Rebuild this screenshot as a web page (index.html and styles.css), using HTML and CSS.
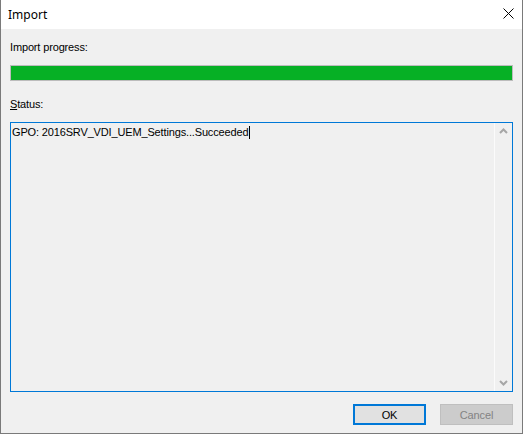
FILE: index.html
```html
<!DOCTYPE html>
<html>
<head>
<meta charset="utf-8">
<link rel="stylesheet" href="styles.css">
</head>
<body>
<div class="window">
  <div class="titlebar">
    <span class="title">Import</span>
    <svg class="close" width="11" height="11" viewBox="0 0 11 11"><path d="M0.5 0.5 L10.5 10.5 M10.5 0.5 L0.5 10.5" stroke="#000" stroke-width="1" fill="none"/></svg>
  </div>
  <div class="content">
    <div class="label l1">Import progress:</div>
    <div class="progress"><div class="fill"></div></div>
    <div class="label l2"><u>S</u>tatus:</div>
    <div class="textbox">
      <div class="text">GPO: 2016SRV_VDI_UEM_Settings...Succeeded<span class="caret"></span></div>
      <div class="scrollbar">
        <svg class="arrow" width="17" height="17" viewBox="0 0 17 17"><path d="M5 10 L8.5 6.5 L12 10" stroke="#a6a6a6" stroke-width="2" fill="none"/></svg>
        <svg class="arrow" width="17" height="17" viewBox="0 0 17 17"><path d="M5 7 L8.5 10.5 L12 7" stroke="#a6a6a6" stroke-width="2" fill="none"/></svg>
      </div>
    </div>
    <div class="buttons">
      <div class="btn ok">OK</div>
      <div class="btn cancel">Cancel</div>
    </div>
  </div>
</div>
</body>
</html>
```
FILE: styles.css
```css
html, body {
  margin: 0;
  padding: 0;
  background: #f0f0f0;
}
.window {
  box-sizing: border-box;
  width: 523px;
  height: 434px;
  border: 1px solid #7a7a7a;
  border-top: none;
  background: #f0f0f0;
  font-family: "Liberation Sans", Arial, sans-serif;
  font-size: 11px;
  letter-spacing: -0.15px;
  color: #000;
  display: flex;
  flex-direction: column;
}
.titlebar {
  height: 29px;
  background: #fff;
  display: flex;
  align-items: center;
  justify-content: space-between;
  padding: 0 8px 0 7px;
}
.title {
  font-family: "Noto Sans", "Open Sans", sans-serif;
  font-size: 12px;
  letter-spacing: 0;
  color: #000;
  margin-top: -1px;
}
.close {
  display: block;
  margin-top: -3px;
}
.content {
  padding: 0 9px 0 9px;
  display: flex;
  flex-direction: column;
}
.label {
  line-height: 13px;
  height: 13px;
}
.l1 { margin-top: 12px; }
.progress {
  margin-top: 11px;
  height: 16px;
  box-sizing: border-box;
  border: 1px solid #bcbcbc;
  background: #e6e6e6;
}
.fill {
  height: 100%;
  width: 100%;
  background: #06b025;
}
.l2 { margin-top: 17px; }
.textbox {
  margin-top: 11px;
  height: 270px;
  box-sizing: border-box;
  border: 1px solid #0078d7;
  display: flex;
}
.text {
  flex: 1;
  padding: 3px 0 0 1px;
  line-height: 13px;
  white-space: nowrap;
}
.caret {
  display: inline-block;
  width: 1px;
  height: 13px;
  background: #000;
  vertical-align: -3px;
  margin-left: 1px;
}
.scrollbar {
  width: 17px;
  border-left: 1px solid #fbfbfb;
  background: #f0f0f0;
  display: flex;
  flex-direction: column;
  justify-content: space-between;
}
.arrow { display: block; }
.buttons {
  margin-top: 12px;
  display: flex;
  justify-content: flex-end;
  gap: 14px;
}
.btn {
  box-sizing: border-box;
  width: 73px;
  height: 21px;
  display: flex;
  align-items: center;
  justify-content: center;
}
.ok {
  border: 2px solid #0078d7;
  background: #e1e1e1;
}
.cancel {
  border: 1px solid #bfbfbf;
  background: #cccccc;
  color: #838383;
}
```
